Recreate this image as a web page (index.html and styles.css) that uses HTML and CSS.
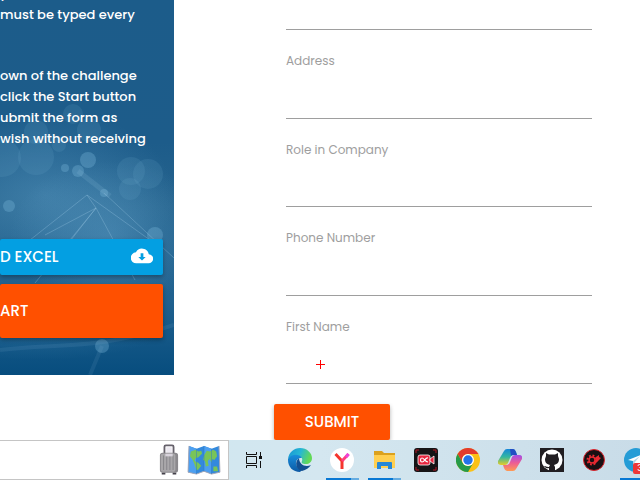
FILE: index.html
```html
<!DOCTYPE html>
<html lang="en">
<head>
<meta charset="utf-8">
<meta name="viewport" content="width=device-width, initial-scale=1">
<title>Challenge</title>
<link rel="stylesheet" href="styles.css">
</head>
<body>
<main class="page">
  <section class="panel">
    <svg class="bokeh" viewBox="0 0 174 375" preserveAspectRatio="xMidYMax slice" aria-hidden="true">
      <defs>
        <radialGradient id="haze"><stop offset="0" stop-color="#6aaad2" stop-opacity=".36"/><stop offset="1" stop-color="#6aaad2" stop-opacity="0"/></radialGradient>
      </defs>
      <ellipse cx="45" cy="195" rx="130" ry="85" fill="url(#haze)"/>
      <ellipse cx="110" cy="235" rx="100" ry="75" fill="url(#haze)"/>
      <ellipse cx="40" cy="325" rx="130" ry="35" fill="url(#haze)" opacity=".5"/>
      <g fill="#73acd0" fill-opacity=".15">
        <circle cx="73" cy="114" r="10"/><circle cx="89" cy="130" r="12"/><circle cx="36" cy="132" r="12"/>
        <circle cx="59" cy="145" r="7"/><circle cx="36" cy="157" r="18"/><circle cx="2" cy="158" r="19"/>
        <circle cx="131" cy="171" r="14"/><circle cx="148" cy="174" r="15"/><circle cx="130" cy="189" r="11"/>
      </g>
      <g fill="#78b5d9" fill-opacity=".34">
        <circle cx="88" cy="160" r="8"/><circle cx="65" cy="168" r="4"/><circle cx="78" cy="171" r="6"/>
        <circle cx="9" cy="206" r="6"/><circle cx="104" cy="193" r="4"/><circle cx="155" cy="235" r="8"/>
        <circle cx="102" cy="346" r="7"/>
      </g>
      <g fill="none" stroke="#9cc8e3" stroke-opacity=".32">
        <path d="M30 240 87 195 96 208 35 283M87 195 150 240M96 208 135 280M96 208 45 235M104 193 174 258M96 208 71 240"/>
        <path d="M78 171 110 196" stroke-width="5" stroke-opacity=".15"/>
        <path d="M0 350C60 343 100 350 174 325M90 375 102 346" stroke-width="4" stroke-opacity=".1"/>
      </g>
    </svg>
    <p class="copy"><span class="line">y where each</span><span class="line">must be typed every</span></p>
    <p class="copy"><span class="line">own of the challenge</span><span class="line">click the Start button</span><span class="line">ubmit the form as</span><span class="line">wish without receiving</span></p>
    <div class="actions">
      <button class="btn download" type="button"><span>D EXCEL</span>
        <svg width="22" height="22" viewBox="0 0 24 24" aria-hidden="true"><path fill="#fff" d="M19.400 10A7.500 7.500 0 0 0 5.400 8 6 6 0 0 0 6 20h13a5 5 0 0 0 .4-10zM16 13l-4 4-4-4h2.500V9h3v4z"/></svg>
      </button>
      <button class="btn start" type="button">ART</button>
    </div>
  </section>
  <form class="form">
    <div class="field first"><input type="text" aria-label="Field"></div>
    <div class="field"><label for="address">Address</label><input id="address" type="text"></div>
    <div class="field"><label for="role">Role in Company</label><input id="role" type="text"></div>
    <div class="field"><label for="phone">Phone Number</label><input id="phone" type="text"></div>
    <div class="field"><label for="name">First Name</label><input id="name" type="text">
      <svg class="cross" width="9" height="9" viewBox="0 0 9 9" aria-hidden="true"><path d="M0 4h9v1H0zM4 0h1v9H4z" fill="#f00" shape-rendering="crispEdges"/></svg>
    </div>
    <button class="btn submit" type="submit">SUBMIT</button>
  </form>
</main>
<footer class="taskbar">
  <div class="search">
    <svg width="20" height="34" viewBox="0 0 22 34" aria-hidden="true">
      <path d="M6 10V2.500Q6 1 7.500 1h7Q16 1 16 2.500V10" fill="none" stroke="#66616b" stroke-width="2"/>
      <path d="M8 3h6v6H8z" fill="#ece8f0"/>
      <rect x="1" y="9" width="20" height="22" rx="3" fill="#8b898d"/><rect x="2" y="10" width="16" height="20" rx="2" fill="#a9a7aa"/>
      <path d="M5 12v16M8.500 12v16M12 12v16M15.500 12v16" stroke="#858388"/><path d="M7 10h8v3H7z" fill="#d8d3dc"/>
      <path d="M3 31h4v2H3zM15 31h4v2h-4z" fill="#44414a"/>
    </svg>
    <svg width="34" height="30" viewBox="0 0 36 32" aria-hidden="true">
      <path d="M2 1 10 4 18 1 26 4 34 1 35 29 26 31 18 28 10 31 1 29z" fill="#3389dd"/>
      <path d="M2 1 10 4 10 31 1 29zM18 1l8 3v27l-8-3z" fill="#4d9ff0"/>
      <path d="M4 7l5-2 3 2 3-1 1 3-4 4-3 1-1 3 4 2 3 3-3 4-2 1-2-6-2-5-3-4zM18 11l3-5 3 1 4-2 3 2 1 5-3 4-2-1-1 4-2-4-2 2 1 5-3 1-1-6-2-1zM28 23h4l1 5h-5z" fill="#79c458"/>
      <path d="M2 1 1 29l9 2 8-3 8 3 9-2-1-28" fill="none" stroke="#a5a6b5"/>
      <path d="M10 4v27M18 1v27M26 4v27" stroke="#2e79bf" stroke-opacity=".5"/>
    </svg>
  </div>
  <button class="app view" type="button" aria-label="Task view">
    <svg width="18" height="18" viewBox="0 0 18 18" aria-hidden="true"><path d="M1.500 1v2.500h10V1M1.500 17v-2.500h10V17M1.500 5.500h10v7h-10zM15.500 1v4M15.500 10v7" fill="none" stroke="#111"/><path d="M14 5h3v3h-3z" fill="#111"/></svg>
  </button>
  <button class="app" type="button" aria-label="Edge">
    <svg width="24" height="24" viewBox="0 0 24 24" aria-hidden="true">
      <defs><linearGradient id="e1" x2="1" y2=".3"><stop stop-color="#1794d4"/><stop offset=".55" stop-color="#27b7d4"/><stop offset="1" stop-color="#62d957"/></linearGradient><linearGradient id="e2" x2="0" y2="1"><stop stop-color="#188edc"/><stop offset="1" stop-color="#0c59a4"/></linearGradient></defs>
      <path d="M0 11C1 4 6 0 12 0c7 0 12 5 12 10 0 4-3 6-6 6-4 0-5-1-4-3 2-5-7-8-14-2z" fill="url(#e1)"/>
      <path d="M0 11c3-5 11-6 14-1-7-1-9 9 0 12l-2 2C5 24 0 19 0 12z" fill="url(#e2)"/>
      <path d="M11 10c-5 4-3 12 3 13 4-1 7-3 9-6-6 3-12-1-12-7z" fill="#124f91"/>
    </svg>
  </button>
  <button class="app open" type="button" aria-label="Yandex Browser">
    <svg width="24" height="24" viewBox="0 0 24 24" aria-hidden="true"><circle cx="12" cy="12" r="12" fill="#fff"/><path d="M5.500 6 12 13M12 12v9" fill="none" stroke="#f5352d" stroke-width="3"/><path d="M12 13 18.500 6" stroke="#ff3d80" stroke-width="3"/><path d="m16 9 2.500-3" stroke="#ed45dc" stroke-width="3"/></svg>
  </button>
  <button class="app open" type="button" aria-label="File Explorer">
    <svg width="24" height="24" viewBox="0 0 24 24" aria-hidden="true"><path d="M2 3h8l2 2h11v5H2z" fill="#dba11e"/><path d="M2 7h21v13H2z" fill="#ffcf50"/><path d="M5 21v-6q0-1 1-1h13q1 0 1 1v6h-4v-3H9v3z" fill="#2587d7"/></svg>
  </button>
  <button class="app" type="button" aria-label="Screen recorder">
    <svg width="24" height="24" viewBox="0 0 24 24" aria-hidden="true"><rect width="24" height="24" rx="3" fill="#151416"/><path d="M2 5V2h3M19 2h3v3M2 19v3h3M19 22h3v-3" fill="none" stroke="#b41725"/><rect x="4" y="7" width="12" height="10" rx="2" fill="#e82740" stroke="#fff" stroke-width=".8"/><path d="m16 11 4-3v8l-4-3z" fill="#e82740" stroke="#fff" stroke-width=".8"/><path d="M14 10c-3-1-3 4-6 4-2 0-2-4 0-4 2 0 3 4 6 4" fill="none" stroke="#fff" stroke-width="1.200"/></svg>
  </button>
  <button class="app" type="button" aria-label="Chrome">
    <svg width="24" height="24" viewBox="0 0 24 24" aria-hidden="true"><circle cx="12" cy="12" r="12" fill="#fbc116"/><path d="M1.600 6A12 12 0 0 1 22.400 6H12a6 6 0 0 0-5.200 9z" fill="#e33b2e"/><path d="M1.600 6A12 12 0 0 0 12 24l5.200-9a6 6 0 0 1-10.400 0z" fill="#269b49"/><circle cx="12" cy="12" r="6" fill="#fff"/><circle cx="12" cy="12" r="4.700" fill="#2473e8"/></svg>
  </button>
  <button class="app" type="button" aria-label="Copilot">
    <svg width="24" height="24" viewBox="0 0 24 24" aria-hidden="true">
      <defs><linearGradient id="c1" x2="0" y2="1"><stop stop-color="#1686d9"/><stop offset=".5" stop-color="#32b7a0"/><stop offset="1" stop-color="#e8cc28"/></linearGradient><linearGradient id="c2" x2="0" y2="1"><stop stop-color="#a34ee8"/><stop offset=".5" stop-color="#ed5d93"/><stop offset="1" stop-color="#ff9a52"/></linearGradient></defs>
      <path d="M6 3q1-2 3-2h6q2 0 3 3l1 3h-4q-2 0-3 3l-2 5q-1 2-3 2H3q-4 0-3-4z" fill="url(#c1)"/>
      <path d="M18 21q-1 2-3 2H9q-2 0-3-3l-1-3h4q2 0 3-3l2-5q1-2 3-2h4q4 0 3 4z" fill="url(#c2)"/><path d="M12 1h3q2 0 3 3l1 3h-4q-1 0-2 1z" fill="#224ec3"/>
    </svg>
  </button>
  <button class="app" type="button" aria-label="GitHub">
    <svg width="24" height="24" viewBox="0 0 24 24" aria-hidden="true"><path fill="#211e22" d="M0 0h24v24H0z"/><circle cx="12" cy="12" r="10.500" fill="#fff"/><path d="M9 23v-3c-3 1-4-1-5-2 2 0 2 1 5 1l1-2c-4-1-5-3-5-6l1-3V5l3 1.500h6L18 5v3l1 3c0 3-1 5-5 6l1 2v4z" fill="#211e22"/></svg>
  </button>
  <button class="app" type="button" aria-label="Settings tool">
    <svg width="24" height="24" viewBox="0 0 24 24" aria-hidden="true"><circle cx="12" cy="12" r="10.500" fill="#191013" stroke="#df252d"/><circle cx="10" cy="12" r="3" fill="none" stroke="#eb2931" stroke-width="1.500"/><circle cx="10" cy="12" r="4.500" fill="none" stroke="#eb2931" stroke-width="2" stroke-dasharray="1.800 1.730"/><path d="m14 9 3-2v2l2 1-3 3-3 3v-3z" fill="#eb2931"/></svg>
  </button>
  <button class="app open" type="button" aria-label="Telegram">
    <svg width="24" height="24" viewBox="0 0 24 24" aria-hidden="true"><circle cx="12" cy="12" r="12" fill="#259cd6"/><path d="m4 12 15-6-3 14-5-4-2 2v-5z" fill="#fff"/><path d="m9 13 7-5-5 6-2 4z" fill="#b5d7e8"/></svg>
    <span class="badge">3</span>
  </button>
</footer>
</body>
</html>
```
FILE: styles.css
```css
* { box-sizing: border-box; }
body {
  margin: 0;
  min-height: 100vh;
  display: flex;
  flex-direction: column;
  overflow: hidden;
  background: #fff;
  font-family: Poppins, Inter, "Liberation Sans", sans-serif;
}
button { border: 0; padding: 0; font: inherit; }
svg { display: block; flex: none; }
.page {
  flex: 1;
  display: grid;
  grid-template-columns: 174px 1fr;
}
.panel {
  position: relative;
  align-self: start;
  overflow: hidden;
  padding-bottom: 37px;
  color: #fff;
  background: linear-gradient(#1c5c8a, #1d5c8a 38%, #26648e 55%, #20618f 80%, #074d7e);
}
.bokeh { position: absolute; inset: 0; width: 100%; height: 100%; }
.copy {
  position: relative;
  margin: 0 0 40px;
  font-size: 13px;
  font-weight: 500;
  line-height: 21px;
  white-space: nowrap;
}
.copy:first-of-type { margin-top: -17px; }
.line { display: block; }
.actions {
  position: relative;
  display: grid;
  gap: 9px;
  margin: 90px 11px 0 0;
}
.btn {
  height: 36px;
  padding-bottom: 2px;
  border-radius: 2px;
  color: #fff;
  font-size: 15px;
  font-weight: 500;
  box-shadow: 0 2px 4px rgba(0, 0, 0, .3);
}
.download {
  display: flex;
  align-items: center;
  justify-content: space-between;
  padding-right: 10px;
  background: #039fe2;
}
.start { height: 54px; text-align: left; background: #ff5000; }
.form {
  display: flex;
  flex-direction: column;
  padding: 0 48px 0 112px;
}
.field {
  position: relative;
  flex: 1;
  display: flex;
  flex-direction: column;
  justify-content: space-between;
  padding-top: 23px;
}
.field.first { flex: none; padding: 0; }
.field label { color: #9e9e9e; font-size: 12px; line-height: 16px; }
.field input {
  width: 100%;
  height: 30px;
  padding: 0;
  border: 0;
  border-bottom: 1px solid #9e9e9e;
  background: transparent;
  font: inherit;
}
.cross { position: absolute; left: 30px; bottom: 15px; }
.submit {
  width: 116px;
  margin: 20px 0 0 -12px;
  background: #ff5000;
}
.taskbar {
  position: relative;
  height: 40px;
  display: flex;
  overflow: hidden;
  background: linear-gradient(90deg, #cce7f0, #d4e7f0 50%, #c9dce8);
}
.search {
  width: 229px;
  flex: none;
  display: flex;
  align-items: center;
  justify-content: flex-end;
  gap: 8px;
  padding-right: 7px;
  border: 1px solid #c5c5c5;
  border-left: 0;
  background: #fff;
}
.app {
  position: relative;
  flex: 0 0 42px;
  display: grid;
  place-items: center;
  background: transparent;
}
.view { flex-basis: 50px; }
.open::after {
  content: "";
  position: absolute;
  left: 5px;
  right: 4px;
  bottom: 0;
  height: 2px;
  background: linear-gradient(90deg, #0878d4 25px, #65ace1 25px);
}
.badge {
  position: absolute;
  left: 18px;
  top: 23px;
  width: 14px;
  height: 11px;
  border-radius: 2px;
  background: #ee3737;
  color: #fff;
  font-size: 9px;
  line-height: 11px;
}
```
